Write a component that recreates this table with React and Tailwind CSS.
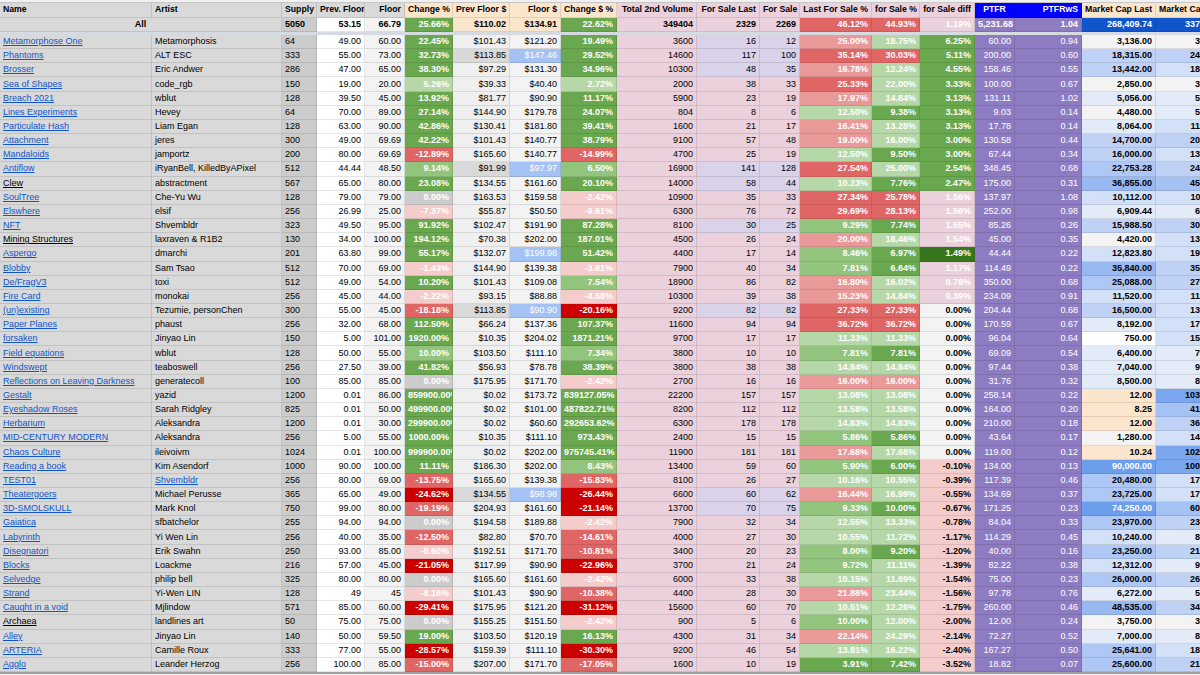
import React from "react";
import clsx from "clsx";

const W = {
  name: "w-[152px]",
  artist: "w-[130px]",
  supply: "w-[35px]",
  pf: "w-[48px]",
  fl: "w-[40px]",
  chg: "w-[48px]",
  pfd: "w-[57px]",
  fld: "w-[51px]",
  chgd: "w-[56px]",
  vol: "w-[80px]",
  fsl: "w-[63px]",
  fs: "w-[40px]",
  lfs: "w-[72px]",
  fsp: "w-[48px]",
  diff: "w-[55px]",
  ptfr: "w-[40px]",
  ptfrws: "w-[67px]",
  mcl: "w-[74px]",
  mc: "w-[78px]",
};

const C = {
  G: "bg-[#6aa84f] text-white font-bold",
  g2: "bg-[#93c47d] text-white font-bold",
  g1: "bg-[#b6d7a8] text-white font-bold",
  DG: "bg-[#38761d] text-white font-bold",
  N: "bg-[#cccccc] text-white font-bold",
  p1: "bg-[#f4cccc] text-white font-bold",
  p2: "bg-[#ea9999] text-white font-bold",
  r: "bg-[#e06666] text-white font-bold",
  R: "bg-[#cc0000] text-white font-bold",
  pk: "bg-[#ead1dc] text-white font-bold",
};

// name, link, artist, artistLink, supply, prevFloor, floor, change%, prevFloor$, darkPrev, floor$, blueFloor,
// change$%, volume, forSaleLast, forSale, lavender, lastForSale%, forSale% tone, forSale%, diff, ptfr, ptfrws
const rows = [
  ["Metamorphose One",1,"Metamorphosis",0,64,"49.00","60.00","22.45%","$101.43",0,"$121.20",0,"19.49%",3600,16,12,1,"25.00%","l","18.75%","6.25%","60.00","0.94"],
  ["Phantoms",1,"ALT ESC",0,333,"55.00","73.00","32.73%","$113.85",1,"$147.46",1,"29.52%",14600,117,100,1,"35.14%","r","30.03%","5.11%","200.00","0.60"],
  ["Brosser",1,"Eric Andwer",0,286,"47.00","65.00","38.30%","$97.29",0,"$131.30",0,"34.96%",10300,48,35,1,"16.78%","l","12.24%","4.55%","158.46","0.55"],
  ["Sea of Shapes",1,"code_rgb",0,150,"19.00","20.00","5.26%","$39.33",0,"$40.40",0,"2.72%",2000,38,33,0,"25.33%","l","22.00%","3.33%","100.00","0.67"],
  ["Breach 2021",1,"wblut",0,128,"39.50","45.00","13.92%","$81.77",0,"$90.90",0,"11.17%",5900,23,19,0,"17.97%","l","14.84%","3.13%","131.11","1.02"],
  ["Lines Experiments",1,"Hevey",0,64,"70.00","89.00","27.14%","$144.90",0,"$179.78",0,"24.07%",804,8,6,0,"12.50%","G","9.38%","3.13%","9.03","0.14"],
  ["Particulate Hash",1,"Liam Egan",0,128,"63.00","90.00","42.86%","$130.41",0,"$181.80",0,"39.41%",1600,21,17,0,"16.41%","l","13.28%","3.13%","17.78","0.14"],
  ["Attachment",1,"jeres",0,300,"49.00","69.69","42.22%","$101.43",0,"$140.77",0,"38.79%",9100,57,48,0,"19.00%","l","16.00%","3.00%","130.58","0.44"],
  ["Mandaloids",1,"jamportz",0,200,"80.00","69.69","-12.89%","$165.60",0,"$140.77",0,"-14.99%",4700,25,19,0,"12.50%","G","9.50%","3.00%","67.44","0.34"],
  ["Antiflow",1,"iRyanBell, KilledByAPixel",0,512,"44.44","48.50","9.14%","$91.99",1,"$97.97",1,"6.50%",16900,141,128,1,"27.54%","l","25.00%","2.54%","348.45","0.68"],
  ["Clew",0,"abstractment",0,567,"65.00","80.00","23.08%","$134.55",0,"$161.60",0,"20.10%",14000,58,44,1,"10.23%","G","7.76%","2.47%","175.00","0.31"],
  ["SoulTree",1,"Che-Yu Wu",0,128,"79.00","79.00","0.00%","$163.53",0,"$159.58",0,"-2.42%",10900,35,33,0,"27.34%","r","25.78%","1.56%","137.97","1.08"],
  ["Elswhere",1,"elsif",0,256,"26.99","25.00","-7.37%","$55.87",0,"$50.50",0,"-9.61%",6300,76,72,0,"29.69%","r","28.13%","1.56%","252.00","0.98"],
  ["NFT",1,"Shvembldr",0,323,"49.50","95.00","91.92%","$102.47",0,"$191.90",0,"87.28%",8100,30,25,1,"9.29%","G","7.74%","1.55%","85.26","0.26"],
  ["Mining Structures",0,"laxraven & R1B2",0,130,"34.00","100.00","194.12%","$70.38",0,"$202.00",0,"187.01%",4500,26,24,0,"20.00%","l","18.46%","1.54%","45.00","0.35"],
  ["Aspergo",1,"dmarchi",0,201,"63.80","99.00","55.17%","$132.07",0,"$199.98",1,"51.42%",4400,17,14,0,"8.46%","G","6.97%","1.49%","44.44","0.22"],
  ["Blobby",1,"Sam Tsao",0,512,"70.00","69.00","-1.43%","$144.90",0,"$139.38",0,"-3.81%",7900,40,34,0,"7.81%","G","6.64%","1.17%","114.49","0.22"],
  ["De/FragV3",1,"toxi",0,512,"49.00","54.00","10.20%","$101.43",0,"$109.08",0,"7.54%",18900,86,82,0,"16.80%","l","16.02%","0.78%","350.00","0.68"],
  ["Fire Card",1,"monokai",0,256,"45.00","44.00","-2.22%","$93.15",0,"$88.88",0,"-4.58%",10300,39,38,0,"15.23%","l","14.84%","0.39%","234.09","0.91"],
  ["(un)existing",1,"Tezumie, personChen",0,300,"55.00","45.00","-18.18%","$113.85",1,"$90.90",1,"-20.16%",9200,82,82,1,"27.33%","r","27.33%","0.00%","204.44","0.68"],
  ["Paper Planes",1,"phaust",0,256,"32.00","68.00","112.50%","$66.24",0,"$137.36",0,"107.37%",11600,94,94,0,"36.72%","r","36.72%","0.00%","170.59","0.67"],
  ["forsaken",1,"Jinyao Lin",0,150,"5.00","101.00","1920.00%","$10.35",0,"$204.02",0,"1871.21%",9700,17,17,0,"11.33%","l","11.33%","0.00%","96.04","0.64"],
  ["Field equations",1,"wblut",0,128,"50.00","55.00","10.00%","$103.50",0,"$111.10",0,"7.34%",3800,10,10,0,"7.81%","G","7.81%","0.00%","69.09","0.54"],
  ["Windswept",1,"teaboswell",0,256,"27.50","39.00","41.82%","$56.93",0,"$78.78",0,"38.39%",3800,38,38,0,"14.84%","l","14.84%","0.00%","97.44","0.38"],
  ["Reflections on Leaving Darkness",1,"generatecoll",0,100,"85.00","85.00","0.00%","$175.95",0,"$171.70",0,"-2.42%",2700,16,16,0,"16.00%","p","16.00%","0.00%","31.76","0.32"],
  ["Gestalt",1,"yazid",0,1200,"0.01","86.00","859900.00%","$0.02",0,"$173.72",0,"839127.05%",22200,157,157,0,"13.08%","l","13.08%","0.00%","258.14","0.22"],
  ["Eyeshadow Roses",1,"Sarah Ridgley",0,825,"0.01","50.00","499900.00%","$0.02",0,"$101.00",0,"487822.71%",8200,112,112,0,"13.58%","l","13.58%","0.00%","164.00","0.20"],
  ["Herbarium",1,"Aleksandra",0,1200,"0.01","30.00","299900.00%","$0.02",0,"$60.60",0,"292653.62%",6300,178,178,0,"14.83%","l","14.83%","0.00%","210.00","0.18"],
  ["MID-CENTURY MODERN",1,"Aleksandra",0,256,"5.00","55.00","1000.00%","$10.35",0,"$111.10",0,"973.43%",2400,15,15,0,"5.86%","G","5.86%","0.00%","43.64","0.17"],
  ["Chaos Culture",1,"ileivoivm",0,1024,"0.01","100.00","999900.00%","$0.02",0,"$202.00",0,"975745.41%",11900,181,181,0,"17.68%","l","17.68%","0.00%","119.00","0.12"],
  ["Reading a book",1,"Kim Asendorf",0,1000,"90.00","100.00","11.11%","$186.30",0,"$202.00",0,"8.43%",13400,59,60,0,"5.90%","G","6.00%","-0.10%","134.00","0.13"],
  ["TEST01",1,"Shvembldr",1,256,"80.00","69.00","-13.75%","$165.60",0,"$139.38",0,"-15.83%",8100,26,27,0,"10.16%","l","10.55%","-0.39%","117.39","0.46"],
  ["Theatergoers",1,"Michael Perusse",0,365,"65.00","49.00","-24.62%","$134.55",1,"$98.98",1,"-26.44%",6600,60,62,1,"16.44%","l","16.99%","-0.55%","134.69","0.37"],
  ["3D-SMOLSKULL",1,"Mark Knol",0,750,"99.00","80.00","-19.19%","$204.93",0,"$161.60",0,"-21.14%",13700,70,75,1,"9.33%","G","10.00%","-0.67%","171.25","0.23"],
  ["Gaiatica",1,"sfbatchelor",0,255,"94.00","94.00","0.00%","$194.58",0,"$189.88",0,"-2.42%",7900,32,34,0,"12.55%","l","13.33%","-0.78%","84.04","0.33"],
  ["Labyrinth",1,"Yi Wen Lin",0,256,"40.00","35.00","-12.50%","$82.80",0,"$70.70",0,"-14.61%",4000,27,30,0,"10.55%","l","11.72%","-1.17%","114.29","0.45"],
  ["Disegnatori",1,"Erik Swahn",0,250,"93.00","85.00","-8.60%","$192.51",0,"$171.70",0,"-10.81%",3400,20,23,0,"8.00%","G","9.20%","-1.20%","40.00","0.16"],
  ["Blocks",1,"Loackme",0,216,"57.00","45.00","-21.05%","$117.99",0,"$90.90",0,"-22.96%",3700,21,24,0,"9.72%","l","11.11%","-1.39%","82.22","0.38"],
  ["Selvedge",1,"philip bell",0,325,"80.00","80.00","0.00%","$165.60",0,"$161.60",0,"-2.42%",6000,33,38,0,"10.15%","l","11.69%","-1.54%","75.00","0.23"],
  ["Strand",1,"Yi-Wen LIN",0,128,"49","45","-8.16%","$101.43",0,"$90.90",0,"-10.38%",4400,28,30,0,"21.88%","l","23.44%","-1.56%","97.78","0.76"],
  ["Caught in a void",1,"Mjlindow",0,571,"85.00","60.00","-29.41%","$175.95",0,"$121.20",0,"-31.12%",15600,60,70,0,"10.51%","l","12.26%","-1.75%","260.00","0.46"],
  ["Archaea",0,"landlines art",0,50,"75.00","75.00","0.00%","$155.25",0,"$151.50",0,"-2.42%",900,5,6,0,"10.00%","l","12.00%","-2.00%","12.00","0.24"],
  ["Alley",1,"Jinyao Lin",0,140,"50.00","59.50","19.00%","$103.50",0,"$120.19",0,"16.13%",4300,31,34,0,"22.14%","l","24.29%","-2.14%","72.27","0.52"],
  ["ARTERIA",1,"Camille Roux",0,333,"77.00","55.00","-28.57%","$159.39",0,"$111.10",0,"-30.30%",9200,46,54,0,"13.81%","l","16.22%","-2.40%","167.27","0.50"],
  ["Agglo",1,"Leander Herzog",0,256,"100.00","85.00","-15.00%","$207.00",0,"$171.70",0,"-17.05%",1600,10,19,0,"3.91%","G","7.42%","-3.52%","18.82","0.07"],
];

const fmt = (n) => n.toLocaleString("en-US", { minimumFractionDigits: 2, maximumFractionDigits: 2 });

function changeTone(s) {
  const v = parseFloat(s);
  if (v > 10) return C.G;
  if (v >= 6) return C.g2;
  if (v > 0) return C.g1;
  if (v === 0) return C.N;
  if (v > -10) return C.p1;
  if (v >= -20) return C.r;
  return C.R;
}

function lastSaleTone(s) {
  const v = parseFloat(s);
  if (v < 5) return C.G;
  if (v <= 10) return C.g2;
  if (v < 15) return C.g1;
  if (v <= 25) return C.p2;
  return C.r;
}

const saleTone = { l: C.g1, G: C.G, r: C.r, p: C.p2 };

function diffTone(s) {
  const v = parseFloat(s);
  if (s === "1.49%") return C.DG;
  if (v >= 2) return C.G;
  if (v > 0) return C.pk;
  if (v === 0) return "bg-[#f3f3f3] text-black font-bold";
  return "bg-[#f4cccc] text-black font-bold";
}

function capLastTone(v) {
  if (v < 100) return "bg-[#fce5cd]";
  if (v < 1000) return "bg-white";
  if (v < 5000) return "bg-[#f3f3f3]";
  if (v < 9000) return "bg-[#e3ebf9]";
  if (v < 13000) return "bg-[#d3e1f8]";
  if (v < 20000) return "bg-[#bfd2f5]";
  if (v < 30000) return "bg-[#aec7f4]";
  if (v < 60000) return "bg-[#97b8f1]";
  return "bg-[#6d9eeb] text-white";
}

function capTone(v) {
  if (v < 5000) return "bg-[#f3f3f3]";
  if (v < 10000) return "bg-[#e3ebf9]";
  if (v < 20000) return "bg-[#d3e1f8]";
  if (v < 40000) return "bg-[#bfd2f5]";
  if (v < 70000) return "bg-[#a4c2f4]";
  return "bg-[#7ba7ee]";
}

function Cell({ w, cls, right, center, children }) {
  return (
    <div
      className={clsx(
        "shrink-0 h-full flex items-center overflow-hidden whitespace-nowrap border-r border-b border-black/10 px-[3px] leading-none",
        w,
        right && "[justify-content:safe_flex-end]",
        center && "justify-center",
        cls
      )}
    >
      {children}
    </div>
  );
}

function HeaderRow() {
  const gray = "bg-[#d9d9d9] px-[1px]";
  const peach = "bg-[#fce5cd] px-[1px]";
  const pink = "bg-[#ead1dc] px-[1px]";
  const blue = "bg-[#0000ff] text-white px-[1px]";
  return (
    <div className="flex h-[14.5px] font-bold text-[8.7px]">
      <Cell w={W.name} cls="bg-[#d9d9d9]">Name</Cell>
      <Cell w={W.artist} cls="bg-[#d9d9d9]">Artist</Cell>
      <Cell w={W.supply} cls={gray}>Supply</Cell>
      <Cell w={W.pf} cls={gray} right>Prev. Floor</Cell>
      <Cell w={W.fl} cls={gray} right>Floor</Cell>
      <Cell w={W.chg} cls={peach} right>Change %</Cell>
      <Cell w={W.pfd} cls={peach} right>Prev Floor $</Cell>
      <Cell w={W.fld} cls={peach} right>Floor $</Cell>
      <Cell w={W.chgd} cls={peach} right>Change $ %</Cell>
      <Cell w={W.vol} cls={pink} right>Total 2nd Volume</Cell>
      <Cell w={W.fsl} cls={pink} right>For Sale Last</Cell>
      <Cell w={W.fs} cls={pink} right>For Sale</Cell>
      <Cell w={W.lfs} cls={pink} right>Last For Sale %</Cell>
      <Cell w={W.fsp} cls={pink} right>for Sale %</Cell>
      <Cell w={W.diff} cls={pink} right>for Sale diff</Cell>
      <Cell w={W.ptfr} cls={blue} center>PTFR</Cell>
      <Cell w={W.ptfrws} cls={blue} right>PTFRwS</Cell>
      <Cell w={W.mcl} cls={peach} right>Market Cap Last</Cell>
      <Cell w={W.mc} cls={peach}>Market Cap</Cell>
    </div>
  );
}

function TotalRow() {
  const purple = "bg-[#8e7cc3] text-white";
  const navy = "bg-[#1155cc] text-white";
  return (
    <div className="flex h-[14.5px] font-bold">
      <Cell w="w-[282px]" cls="bg-[#d9d9d9]" center>All</Cell>
      <Cell w={W.supply} cls="bg-[#cccccc]">5050</Cell>
      <Cell w={W.pf} cls="bg-white" right>53.15</Cell>
      <Cell w={W.fl} cls="bg-[#f3f3f3]" right>66.79</Cell>
      <Cell w={W.chg} cls={C.G} right>25.66%</Cell>
      <Cell w={W.pfd} cls="bg-[#fce5cd]" right>$110.02</Cell>
      <Cell w={W.fld} cls="bg-[#fce5cd]" right>$134.91</Cell>
      <Cell w={W.chgd} cls={C.G} right>22.62%</Cell>
      <Cell w={W.vol} cls="bg-[#ead1dc]" right>349404</Cell>
      <Cell w={W.fsl} cls="bg-[#ead1dc]" right>2329</Cell>
      <Cell w={W.fs} cls="bg-[#ead1dc]" right>2269</Cell>
      <Cell w={W.lfs} cls={C.r} right>46.12%</Cell>
      <Cell w={W.fsp} cls={C.r} right>44.93%</Cell>
      <Cell w={W.diff} cls={C.pk} right>1.19%</Cell>
      <Cell w={W.ptfr} cls={purple} right>5,231.68</Cell>
      <Cell w={W.ptfrws} cls={purple} right>1.04</Cell>
      <Cell w={W.mcl} cls={navy} right>268,409.74</Cell>
      <Cell w={W.mc} cls={navy} right>337,264.50</Cell>
    </div>
  );
}

function DataRow({ r }) {
  const [name, link, artist, aLink, supply, pf, fl, chg, pfd, darkPrev, fld, blueFloor, chgd, vol, fsl, fs, lav, lfs, fspTone, fsp, diff, ptfr, ptfrws] = r;
  const capLast = parseFloat(pf) * supply;
  const cap = parseFloat(fl) * supply;
  const sale = lav ? "bg-[#d9d2e9]" : "bg-[#ead1dc]";
  const purple = "bg-[#8e7cc3] text-white";
  return (
    <div className="flex h-[14.16px]">
      <Cell w={W.name} cls="bg-[#d9d9d9]">
        <span className={clsx("underline", link ? "text-[#1155cc]" : "text-black")}>{name}</span>
      </Cell>
      <Cell w={W.artist} cls="bg-[#d9d9d9]">
        {aLink ? <span className="underline text-[#1155cc]">{artist}</span> : artist}
      </Cell>
      <Cell w={W.supply} cls="bg-[#cccccc]">{supply}</Cell>
      <Cell w={W.pf} cls="bg-white" right>{pf}</Cell>
      <Cell w={W.fl} cls="bg-[#f3f3f3]" right>{fl}</Cell>
      <Cell w={W.chg} cls={changeTone(chg)} right>{chg}</Cell>
      <Cell w={W.pfd} cls={darkPrev ? "bg-[#d9d9d9]" : "bg-[#efefef]"} right>{pfd}</Cell>
      <Cell w={W.fld} cls={blueFloor ? "bg-[#a4c2f4] text-white" : "bg-[#f3f3f3]"} right>{fld}</Cell>
      <Cell w={W.chgd} cls={changeTone(chgd)} right>{chgd}</Cell>
      <Cell w={W.vol} cls="bg-[#ead1dc]" right>{vol}</Cell>
      <Cell w={W.fsl} cls={sale} right>{fsl}</Cell>
      <Cell w={W.fs} cls={sale} right>{fs}</Cell>
      <Cell w={W.lfs} cls={lastSaleTone(lfs)} right>{lfs}</Cell>
      <Cell w={W.fsp} cls={saleTone[fspTone]} right>{fsp}</Cell>
      <Cell w={W.diff} cls={diffTone(diff)} right>{diff}</Cell>
      <Cell w={W.ptfr} cls={purple} right>{ptfr}</Cell>
      <Cell w={W.ptfrws} cls={purple} right>{ptfrws}</Cell>
      <Cell w={W.mcl} cls={clsx("font-bold", capLastTone(capLast))} right>{fmt(capLast)}</Cell>
      <Cell w={W.mc} cls={clsx("font-bold", capTone(cap))} right>{fmt(cap)}</Cell>
    </div>
  );
}

export default function App() {
  return (
    <div className="w-[1200px] h-[675px] overflow-hidden bg-[#f1f1f1] text-black text-[9px] font-['Liberation_Sans',Arial,sans-serif]">
      <div className="w-[1234px] bg-white">
        <div className="h-[3px] bg-[#f1f1f1] border-b border-[#c6c6c6]" />
        <HeaderRow />
        <TotalRow />
        <div className="h-[3px] bg-[#d6dbe2]" />
        {rows.map((r) => (
          <DataRow key={r[0]} r={r} />
        ))}
        <div className="h-[2px] bg-[#9e9e9e]" />
      </div>
    </div>
  );
}
